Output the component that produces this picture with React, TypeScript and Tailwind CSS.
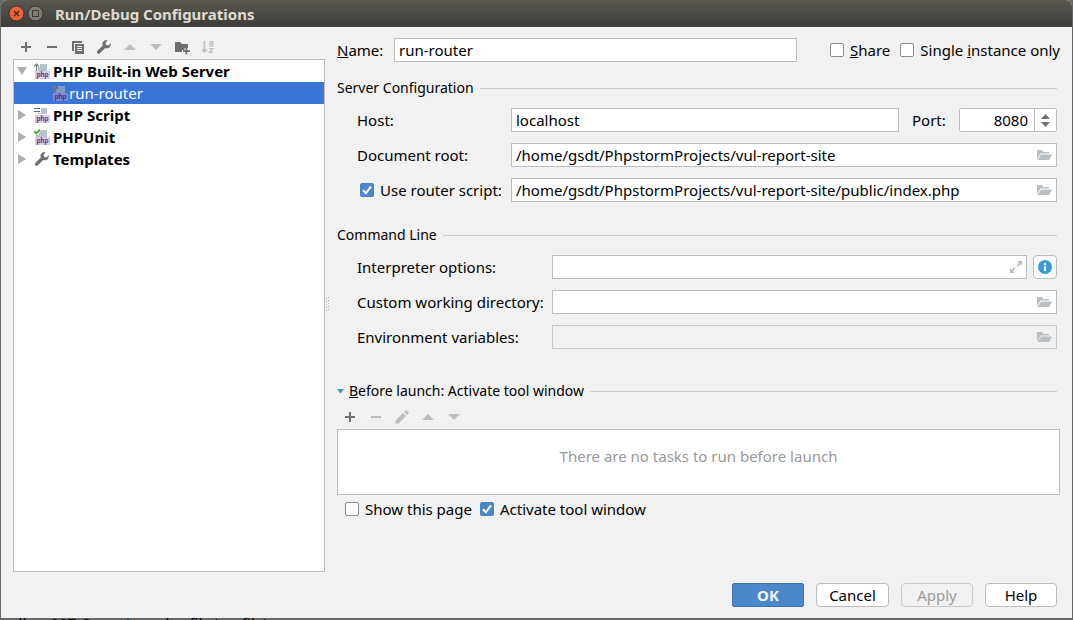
import { useState } from "react";
import type { ReactNode } from "react";

const DARK = "#6e6e6e";
const PALE = "#bdbdbd";

function Icon({ children, size = 16 }: { children: ReactNode; size?: number }) {
  return (
    <svg width={size} height={size} viewBox="0 0 16 16" aria-hidden="true" className="shrink-0">
      {children}
    </svg>
  );
}

const Plus = () => (
  <Icon>
    <path fill={DARK} d="M7 3h2v4h4v2H9v4H7V9H3V7h4z" />
  </Icon>
);
const Minus = ({ color = DARK }: { color?: string }) => (
  <Icon>
    <path fill={color} d="M3 7h10v2H3z" />
  </Icon>
);
const Copy = () => (
  <Icon>
    <path fill={DARK} d="M2 2h10v2H4v8H2z" />
    <path fill={DARK} fillRule="evenodd" d="M5 5h9v10H5zM7 7v1h5V7zm0 2v1h5V9zm0 2v1h5v-1z" />
  </Icon>
);
const Wrench = () => (
  <Icon>
    <path
      fill={DARK}
      d="M14.700 4.300l-2.400 2.200-2.200-.5-.6-2.200L11.700 1.500C9.800.9 7.700 1.400 6.800 3.300c-.5 1.100-.4 2.200 0 3.200L1.500 11.800c-.8.8-.8 1.800-.1 2.500s1.800.7 2.500 0l5.300-5.300c1.300.5 2.900.4 4.100-.6 1.200-1 1.800-2.600 1.400-4.100z"
    />
  </Icon>
);
const Up = () => (
  <Icon>
    <path fill={PALE} d="M2 11l6-6 6 6z" />
  </Icon>
);
const Down = () => (
  <Icon>
    <path fill={PALE} d="M2 5h12l-6 6z" />
  </Icon>
);
const NewFolder = () => (
  <Icon>
    <path fill={DARK} d="M1 3h5l2 2h6v4h-3.500v2H8v2H1z" />
    <path fill={DARK} d="M11.500 9h1.700v2.300H16V13h-2.800v2.500h-1.700V13H9v-1.700h2.500z" />
  </Icon>
);
const Sort = () => (
  <Icon>
    <path fill={PALE} d="M3.500 2h1.700v8.500H8L4.400 14 .8 10.500h2.700z" />
    <path
      fill="none"
      stroke={PALE}
      strokeWidth="1.200"
      d="M9.500 2.600h3.200v4.200h-2.800V4.700h2.800M9.300 9.600h3.500L9.500 13.400h3.600"
    />
  </Icon>
);
const Pencil = () => (
  <Icon>
    <path fill={PALE} d="M1.500 11.500l7.500-7.500 3 3-7.500 7.500h-3zM10 3l1.500-1.500q.8-.6 1.500 0l1.500 1.500q.6.8 0 1.500L13 6z" />
  </Icon>
);
const Folder = () => (
  <Icon>
    <path fill="#b9c0c5" d="M1 3h5l1.500 2H13v1.500H4.500L1 12.500zM4.900 7.500H16L13.200 13H1.600z" />
  </Icon>
);
const Expand = () => (
  <Icon>
    <path fill="#b9c0c5" d="M9 2h5v5l-1.700-1.700-2.600 2.500-1.300-1.300L11 3.800zM7 14H2V9l1.700 1.700 2.400-2.400 1.300 1.300L5 12.200z" />
  </Icon>
);

function PhpIcon({ kind, selected = false }: { kind: "web" | "script" | "unit"; selected?: boolean }) {
  const block = selected ? "#7f9cc4" : "#b7c1c9";
  return (
    <svg width="16" height="16" viewBox="0 0 16 16" aria-hidden="true" className="shrink-0">
      {kind === "web" && (
        <>
          <path fill={block} d="M6 1h7v7H4V4h2z" />
          <path fill="none" stroke="#6e7c86" strokeWidth="1.200" d="M2.500 8V1M.3 3.500L2.500 1l2.200 2.500" />
        </>
      )}
      {kind === "script" && (
        <>
          <path fill={block} d="M7 1h6v6H4V6h3z" />
          <path fill="#5d6870" d="M0 1h6v1H0zM0 4h6v1H0z" />
        </>
      )}
      {kind === "unit" && (
        <>
          <path fill={block} d="M7 1h6v7H2V6h2z" />
          <path fill="none" stroke="#3fa52a" strokeWidth="1.700" d="M.3 2.300L2.300 4.500 6 .6" />
        </>
      )}
      <path fill={selected ? "#8287df" : "#dcc9f6"} d="M1 8h15v8H1z" />
      <text
        x="8.500"
        y="14"
        textAnchor="middle"
        fontSize="7"
        fontWeight="700"
        fontFamily="Roboto, sans-serif"
        fill={selected ? "#3a3880" : "#54456b"}
      >
        php
      </text>
    </svg>
  );
}

function ToolButton({ label, children, disabled }: { label: string; children: ReactNode; disabled?: boolean }) {
  return (
    <button type="button" aria-label={label} disabled={disabled} className="grid h-6 w-[26px] place-items-center">
      {children}
    </button>
  );
}

function Check({ id, initial = false, children }: { id: string; initial?: boolean; children: ReactNode }) {
  const [on, setOn] = useState(initial);
  return (
    <label htmlFor={id} className="flex items-center gap-1.5 whitespace-nowrap">
      <span className="grid shrink-0">
        <input
          id={id}
          type="checkbox"
          checked={on}
          onChange={(e) => setOn(e.target.checked)}
          className="col-start-1 row-start-1 size-3.5 appearance-none rounded-xs border border-[#8c8c8c] bg-white checked:border-[#4a83c4] checked:bg-[#4a88cb]"
        />
        {on && (
          <svg
            viewBox="0 0 14 14"
            aria-hidden="true"
            className="pointer-events-none col-start-1 row-start-1 size-3.5"
            fill="none"
            stroke="#fff"
            strokeWidth="2"
          >
            <path d="M3 7.200L5.900 10.300 11 3.400" />
          </svg>
        )}
      </span>
      <span>{children}</span>
    </label>
  );
}

const fieldBox = "flex h-6 min-w-0 flex-1 items-center border border-[#bdbdbd] bg-white";
const fieldInput = "h-full w-full min-w-0 flex-1 bg-transparent px-1 outline-none";

function PathField({ id, value = "", disabled }: { id: string; value?: string; disabled?: boolean }) {
  return (
    <div
      className={
        disabled ? "flex h-6 min-w-0 flex-1 items-center border border-[#c9c9c9] bg-[#f1f1f1]" : fieldBox
      }
    >
      <input id={id} type="text" defaultValue={value} disabled={disabled} className={fieldInput} />
      <button type="button" aria-label="Browse" className="px-1">
        <Folder />
      </button>
    </div>
  );
}

function Heading({ children }: { children: ReactNode }) {
  return (
    <h2 className="flex h-5 items-center gap-1.5 text-[14px] whitespace-nowrap">
      {children}
      <span className="h-px flex-1 bg-[#cbcbcb]" />
    </h2>
  );
}

function TreeArrow({ open = false }: { open?: boolean }) {
  return (
    <svg width="10" height="10" viewBox="0 0 10 10" aria-hidden="true" className="shrink-0">
      <path fill="#adadad" d={open ? "M0 1h10L5 9z" : "M1 0l8 5-8 5z"} />
    </svg>
  );
}

function TreeGroup({ icon, label, open, children }: { icon: ReactNode; label: string; open?: boolean; children?: ReactNode }) {
  return (
    <li role="treeitem" aria-expanded={!!open} aria-label={label}>
      <div className="flex h-[22px] items-center pl-[3px] font-bold">
        <TreeArrow open={open} />
        <span className="ml-[7px] flex items-center gap-[3px]">
          {icon}
          {label}
        </span>
      </div>
      {children}
    </li>
  );
}

export default function App() {
  const [port, setPort] = useState(8080);
  return (
    <div className="flex min-h-screen flex-col bg-[#686868] font-['Noto_Sans',sans-serif] text-[15px] leading-5 text-black">
      <div className="mx-px flex flex-1 flex-col rounded-t-md bg-[#f1f1f1]">
        <header className="flex h-[27px] items-center rounded-t-md bg-linear-to-b from-[#5b5952] to-[#3d3c38] pl-[7px]">
          <button type="button" aria-label="Close">
            <svg width="17" height="17" viewBox="0 0 17 17" aria-hidden="true">
              <circle cx="8.500" cy="8.500" r="7.500" fill="#ee6238" stroke="#35332f" />
              <path d="M6 6l5 5M11 6l-5 5" stroke="#4a2418" strokeWidth="1.300" />
            </svg>
          </button>
          <button type="button" aria-label="Maximize" className="ml-0.5">
            <svg width="17" height="17" viewBox="0 0 17 17" aria-hidden="true">
              <circle cx="8.500" cy="8.500" r="7.500" fill="#7f7d74" stroke="#35332f" />
              <rect x="5.500" y="5.500" width="6" height="6" fill="none" stroke="#3c3b37" />
            </svg>
          </button>
          <h1 className="ml-[11px] text-[15px] font-bold text-[#dfdbd2]">Run/Debug Configurations</h1>
        </header>

        <main className="flex flex-1 pt-2">
          <section aria-label="Configurations" className="flex w-[324px] shrink-0 flex-col pl-3">
            <div className="flex h-6">
              <ToolButton label="Add"><Plus /></ToolButton>
              <ToolButton label="Remove"><Minus /></ToolButton>
              <ToolButton label="Copy"><Copy /></ToolButton>
              <ToolButton label="Edit templates"><Wrench /></ToolButton>
              <ToolButton label="Move up" disabled><Up /></ToolButton>
              <ToolButton label="Move down" disabled><Down /></ToolButton>
              <ToolButton label="New folder"><NewFolder /></ToolButton>
              <ToolButton label="Sort" disabled><Sort /></ToolButton>
            </div>
            <ul role="tree" className="flex-1 border border-[#bdbdbd] bg-white">
              <TreeGroup icon={<PhpIcon kind="web" />} label="PHP Built-in Web Server" open>
                <ul role="group">
                  <li
                    role="treeitem"
                    aria-selected="true"
                    className="flex h-[22px] items-center bg-[#3875d7] pl-[38px] text-white"
                  >
                    <PhpIcon kind="web" selected />
                    <span className="ml-px">run-router</span>
                  </li>
                </ul>
              </TreeGroup>
              <TreeGroup icon={<PhpIcon kind="script" />} label="PHP Script" />
              <TreeGroup icon={<PhpIcon kind="unit" />} label="PHPUnit" />
              <TreeGroup icon={<Wrench />} label="Templates" />
            </ul>
          </section>

          <div role="separator" className="flex w-3 shrink-0 items-center">
            <svg width="6" height="16" viewBox="0 0 6 16" aria-hidden="true" fill="#b0b0b0">
              <path d="M1 2h1v1H1zM1 5h1v1H1zM1 8h1v1H1zM1 11h1v1H1zM1 14h1v1H1zM3 1h1v1H3zM3 4h1v1H3zM3 7h1v1H3zM3 10h1v1H3zM3 13h1v1H3z" />
            </svg>
          </div>

          <form className="min-w-0 flex-1 pt-[3px] pr-3">
            <div className="flex items-center">
              <label htmlFor="name" className="w-[57px] shrink-0"><u>N</u>ame:</label>
              <div className={fieldBox}>
                <input id="name" type="text" defaultValue="run-router" className={fieldInput} />
              </div>
              <div className="flex w-[263px] shrink-0 justify-end gap-2.5">
                <Check id="share"><u>S</u>hare</Check>
                <Check id="single">Single <u>i</u>nstance only</Check>
              </div>
            </div>

            <div className="pt-4 pr-[3px]">
              <Heading>Server Configuration</Heading>
              <div className="flex flex-col gap-[11px] pt-2.5 pl-5">
                <div className="flex items-center">
                  <label htmlFor="host" className="w-[154px] shrink-0">Host:</label>
                  <div className={fieldBox}>
                    <input id="host" type="text" defaultValue="localhost" className={fieldInput} />
                  </div>
                  <label htmlFor="port" className="w-[60px] shrink-0 pl-[13px]">Port:</label>
                  <div className="flex h-6 w-[98px] shrink-0 rounded-xs border border-[#bdbdbd] bg-white">
                    <input
                      id="port"
                      type="text"
                      inputMode="numeric"
                      value={port}
                      onChange={(e) => setPort(Number(e.target.value) || 0)}
                      className="w-full min-w-0 flex-1 bg-transparent px-1.5 text-right outline-none"
                    />
                    <span className="flex w-[22px] flex-col items-center justify-center gap-[3px] border-l border-[#bdbdbd]">
                      <button type="button" aria-label="Increase port" onClick={() => setPort(port + 1)}>
                        <svg width="9" height="5" viewBox="0 0 9 5" className="block" aria-hidden="true">
                          <path fill={DARK} d="M0 5L4.500 0 9 5z" />
                        </svg>
                      </button>
                      <button type="button" aria-label="Decrease port" onClick={() => setPort(port - 1)}>
                        <svg width="9" height="5" viewBox="0 0 9 5" className="block" aria-hidden="true">
                          <path fill={DARK} d="M0 0h9L4.500 5z" />
                        </svg>
                      </button>
                    </span>
                  </div>
                </div>
                <div className="flex items-center">
                  <label htmlFor="root-dir" className="w-[154px] shrink-0">Document root:</label>
                  <PathField id="root-dir" value="/home/gsdt/PhpstormProjects/vul-report-site" />
                </div>
                <div className="flex items-center">
                  <div className="w-[154px] shrink-0 pl-[3px]">
                    <Check id="router" initial>Use router script:</Check>
                  </div>
                  <PathField id="router-script" value="/home/gsdt/PhpstormProjects/vul-report-site/public/index.php" />
                </div>
              </div>
            </div>

            <div className="pt-[23px] pr-[3px]">
              <Heading>Command Line</Heading>
              <div className="flex flex-col gap-[11px] pt-2.5 pl-5">
                <div className="flex items-center">
                  <label htmlFor="options" className="w-[195px] shrink-0">Interpreter options:</label>
                  <div className={fieldBox}>
                    <input id="options" type="text" className={fieldInput} />
                    <button type="button" aria-label="Expand" className="px-0.5">
                      <Expand />
                    </button>
                  </div>
                  <button
                    type="button"
                    aria-label="Configuration options info"
                    className="ml-1.5 grid size-6 shrink-0 place-items-center rounded-sm border border-[#bdbdbd] bg-white"
                  >
                    <Icon>
                      <circle cx="8" cy="8" r="7" fill="#389fd6" />
                      <path fill="#fff" d="M7 4h2v2H7zM7 7h2v5H7z" />
                    </Icon>
                  </button>
                </div>
                <div className="flex items-center">
                  <label htmlFor="cwd" className="w-[195px] shrink-0">Custom working directory:</label>
                  <PathField id="cwd" />
                </div>
                <div className="flex items-center">
                  <label htmlFor="env" className="w-[195px] shrink-0">Environment variables:</label>
                  <PathField id="env" disabled />
                </div>
              </div>
            </div>

            <div className="pt-8">
              <div className="pr-[3px]">
                <Heading>
                  <button type="button" aria-expanded="true" className="flex items-center gap-[5px]">
                    <svg width="7" height="5" viewBox="0 0 7 5" aria-hidden="true">
                      <path fill="#4296c4" d="M0 0h7L3.500 4.500z" />
                    </svg>
                    <span><u>B</u>efore launch: Activate tool window</span>
                  </button>
                </Heading>
              </div>
              <div className="flex pt-1">
                <ToolButton label="Add task"><Plus /></ToolButton>
                <ToolButton label="Remove task" disabled><Minus color={PALE} /></ToolButton>
                <ToolButton label="Edit task" disabled><Pencil /></ToolButton>
                <ToolButton label="Move task up" disabled><Up /></ToolButton>
                <ToolButton label="Move task down" disabled><Down /></ToolButton>
              </div>
              <div className="h-[66px] border border-[#bdbdbd] bg-white pt-4 text-center text-[#999999]">
                There are no tasks to run before launch
              </div>
              <div className="flex gap-2 pt-1 pl-2">
                <Check id="show-page">Show this page</Check>
                <Check id="activate" initial>Activate tool window</Check>
              </div>
            </div>
          </form>
        </main>

        <footer className="flex justify-end gap-3 pt-[11px] pr-[15px] pb-[11px]">
          <button type="button" className="h-6 w-[72px] rounded-xs border border-[#3d72b8] bg-[#4a88c9] font-bold text-[#f3f3f3]">
            OK
          </button>
          <button type="button" className="h-6 w-[73px] rounded-sm border border-[#bdbdbd] bg-white">Cancel</button>
          <button type="button" disabled className="h-6 w-[72px] rounded-sm border border-[#cbcbcb] text-[#9c9c9c]">
            Apply
          </button>
          <button type="button" className="h-6 w-[72px] rounded-sm border border-[#bdbdbd] bg-white">Help</button>
        </footer>
      </div>
      <div className="h-0.5 overflow-hidden leading-[10px] whitespace-nowrap">nulls n 207 Cannot resolve file 'profile'</div>
    </div>
  );
}
